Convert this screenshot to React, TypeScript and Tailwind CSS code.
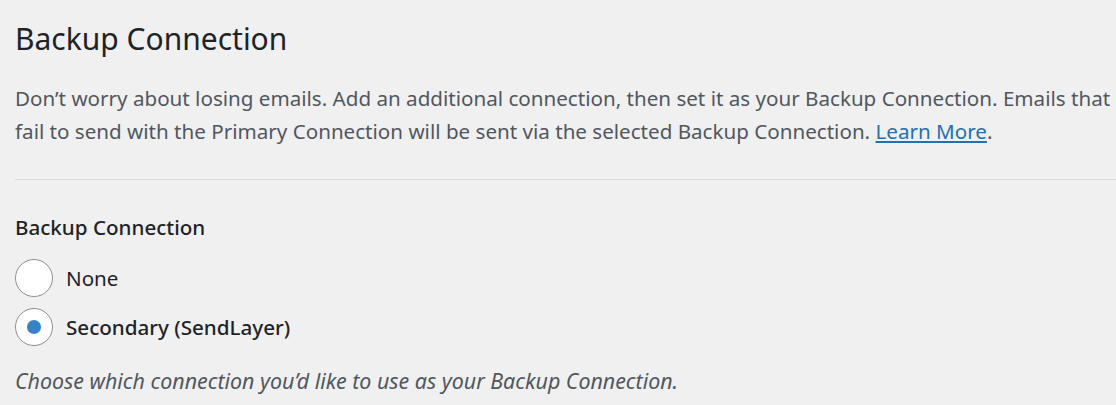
import React, { useState } from 'react';

const font = { fontFamily: '"Noto Sans", "Open Sans", sans-serif' };

export default function App() {
  const [choice, setChoice] = useState('secondary');

  const options = [
    { id: 'none', label: 'None', bold: false },
    { id: 'secondary', label: 'Secondary (SendLayer)', bold: true },
  ];

  return (
    <div className="w-[1116px] h-[405px] bg-[#f0f0f1] overflow-hidden pl-[15px]" style={font}>
      <h2 className="pt-[19px] text-[30px] leading-[40px] text-[#1d2327] font-normal">Backup Connection</h2>
      <p className="mt-[23px] text-[20.6px] leading-[33px] text-[#50575e] whitespace-nowrap">
        Don’t worry about losing emails. Add an additional connection, then set it as your Backup Connection. Emails that
        <br />
        fail to send with the Primary Connection will be sent via the selected Backup Connection.{' '}
        <a href="#" className="text-[#2271b1] underline underline-offset-2">Learn More</a>.
      </p>
      <div className="mt-[31px] h-px bg-[#dcdcde]" />
      <div className="mt-[33px] text-[20.6px] leading-[28px] font-medium text-[#1d2327]">Backup Connection</div>
      <div className="mt-[18px] flex flex-col gap-[11px]">
        {options.map((o) => (
          <label key={o.id} className="flex items-center gap-[13px] cursor-pointer">
            <span
              onClick={() => setChoice(o.id)}
              className="w-[38px] h-[38px] rounded-full border border-[#8c8f94] bg-white flex items-center justify-center"
            >
              {choice === o.id && <span className="w-[14px] h-[14px] rounded-full bg-[#3582c4]" />}
            </span>
            <span className={`text-[20.6px] text-[#1d2327] ${o.bold ? 'font-medium' : ''}`}>{o.label}</span>
          </label>
        ))}
      </div>
      <p className="mt-[19px] text-[21.4px] italic text-[#50575e]">Choose which connection you’d like to use as your Backup Connection.</p>
    </div>
  );
}
